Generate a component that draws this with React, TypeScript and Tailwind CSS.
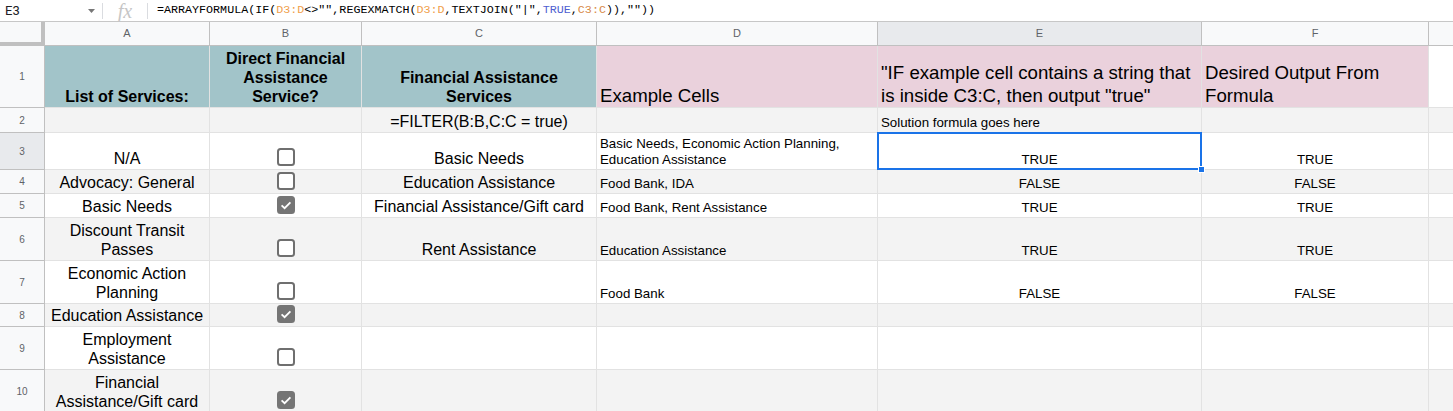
// Google Sheets-style grid: services list with checkbox + REGEXMATCH example
import type { ReactNode } from "react";

const COLS = ["w-[165px]", "w-[152px]", "w-[235px]", "w-[281px]", "w-[324px]", "w-[227px]"];
const LETTERS = ["A", "B", "C", "D", "E", "F"];

type Kind = "body" | "bold" | "small" | "title";

type CellDef = {
  text?: ReactNode;
  kind?: Kind;
  left?: boolean;
  check?: boolean;
  bg?: string;
  selected?: boolean;
};

type RowDef = {
  h: string;
  stripe: boolean;
  cells: CellDef[];
};

const kindClass: Record<Kind, string> = {
  body: "text-[16px] leading-[19px] pb-[1px]",
  bold: "text-[16px] leading-[19px] font-bold pb-[1px]",
  small: "text-[13.3px] leading-[16px] pb-[1px]",
  title: "text-[18.67px] leading-[23px] pb-0",
};

const TEAL = "bg-[#a2c4c9]";
const PINK = "bg-[#ead1dc]";

const rows: RowDef[] = [
  {
    h: "h-[62px]",
    stripe: false,
    cells: [
      { text: "List of Services:", kind: "bold", bg: TEAL },
      { text: <>Direct Financial<br />Assistance<br />Service?</>, kind: "bold", bg: TEAL },
      { text: <>Financial Assistance<br />Services</>, kind: "bold", bg: TEAL },
      { text: "Example Cells", kind: "title", left: true, bg: PINK },
      { text: <>"IF example cell contains a string that<br />is inside C3:C, then output "true"</>, kind: "title", left: true, bg: PINK },
      { text: <>Desired Output From<br />Formula</>, kind: "title", left: true, bg: PINK },
    ],
  },
  {
    h: "h-[25px]",
    stripe: true,
    cells: [
      {},
      {},
      { text: "=FILTER(B:B,C:C = true)" },
      {},
      { text: "Solution formula goes here", kind: "small", left: true },
      {},
    ],
  },
  {
    h: "h-[37px]",
    stripe: false,
    cells: [
      { text: "N/A" },
      { check: false },
      { text: "Basic Needs" },
      { text: <>Basic Needs, Economic Action Planning,<br />Education Assistance</>, kind: "small", left: true },
      { text: "TRUE", kind: "small", selected: true },
      { text: "TRUE", kind: "small" },
    ],
  },
  {
    h: "h-[24px]",
    stripe: true,
    cells: [
      { text: "Advocacy: General" },
      { check: false },
      { text: "Education Assistance" },
      { text: "Food Bank, IDA", kind: "small", left: true },
      { text: "FALSE", kind: "small" },
      { text: "FALSE", kind: "small" },
    ],
  },
  {
    h: "h-[24px]",
    stripe: false,
    cells: [
      { text: "Basic Needs" },
      { check: true },
      { text: "Financial Assistance/Gift card" },
      { text: "Food Bank, Rent Assistance", kind: "small", left: true },
      { text: "TRUE", kind: "small" },
      { text: "TRUE", kind: "small" },
    ],
  },
  {
    h: "h-[43px]",
    stripe: true,
    cells: [
      { text: <>Discount Transit<br />Passes</> },
      { check: false },
      { text: "Rent Assistance" },
      { text: "Education Assistance", kind: "small", left: true },
      { text: "TRUE", kind: "small" },
      { text: "TRUE", kind: "small" },
    ],
  },
  {
    h: "h-[43px]",
    stripe: false,
    cells: [
      { text: <>Economic Action<br />Planning</> },
      { check: false },
      {},
      { text: "Food Bank", kind: "small", left: true },
      { text: "FALSE", kind: "small" },
      { text: "FALSE", kind: "small" },
    ],
  },
  {
    h: "h-[23px]",
    stripe: true,
    cells: [{ text: "Education Assistance" }, { check: true }, {}, {}, {}, {}],
  },
  {
    h: "h-[43px]",
    stripe: false,
    cells: [{ text: <>Employment<br />Assistance</> }, { check: false }, {}, {}, {}, {}],
  },
  {
    h: "h-[43px]",
    stripe: true,
    cells: [{ text: <>Financial<br />Assistance/Gift card</> }, { check: true }, {}, {}, {}, {}],
  },
];

function Checkbox({ checked }: { checked: boolean }) {
  return (
    <svg width="18" height="18" viewBox="0 0 18 18" className="mb-[1px]">
      {checked ? (
        <>
          <rect x="1" y="1" width="16" height="16" rx="2.5" fill="#757575" stroke="#757575" strokeWidth="2" />
          <path d="M4.6 9.3 L7.6 12.2 L13.4 6.4" fill="none" stroke="#fff" strokeWidth="1.8" />
        </>
      ) : (
        <rect x="1" y="1" width="16" height="16" rx="2.5" fill="#fff" stroke="#6f6f6f" strokeWidth="2" />
      )}
    </svg>
  );
}

function Cell({ def, width, stripe }: { def: CellDef; width: string; stripe: boolean }) {
  const kind = def.kind ?? "body";
  const bg = def.bg ?? (stripe ? "bg-[#f3f3f3]" : "bg-white");
  return (
    <div
      className={`relative flex shrink-0 items-end border-r border-b border-[#e2e2e2] px-[3px] text-black ${width} ${bg} ${
        def.left ? "justify-start text-left" : "justify-center text-center"
      } ${def.check !== undefined ? "pb-[2px]" : kindClass[kind]}`}
    >
      {def.check !== undefined ? <Checkbox checked={def.check} /> : <div className="whitespace-nowrap">{def.text}</div>}
      {def.selected && (
        <>
          <div className="pointer-events-none absolute top-[-1px] left-[-1px] right-[-1px] bottom-[-1px] z-10 border-2 border-[#1a73e8]" />
          <div className="absolute right-[-4px] bottom-[-4px] z-20 h-[7px] w-[7px] border border-white bg-[#1a73e8]" />
        </>
      )}
    </div>
  );
}

export default function App() {
  return (
    <div className="h-[411px] w-[1453px] overflow-hidden bg-white font-['Liberation_Sans',Arial,sans-serif]">
      {/* formula bar */}
      <div className="flex h-[22px] items-center border-b border-[#c7c7c7] bg-white">
        <div className="flex h-full w-[102px] items-center justify-between pl-[5px] pr-[7px] font-['Roboto',sans-serif] text-[13px] text-[#202124]">
          <span>E3</span>
          <svg width="7" height="4" viewBox="0 0 7 4">
            <polygon points="0,0 7,0 3.5,4" fill="#777" />
          </svg>
        </div>
        <div className="h-[16px] w-px bg-[#dadce0]" />
        <div className="flex w-[44px] items-center justify-center font-['Liberation_Serif',serif] text-[20px] italic leading-none text-[#c6c6c6]">
          fx
        </div>
        <div className="h-[16px] w-px bg-[#dadce0]" />
        <div className="pl-[9px] font-['Liberation_Mono',monospace] text-[11.7px] text-black">
          =ARRAYFORMULA(IF(<span className="text-[#f0a04b]">D3:D</span>&lt;&gt;"",REGEXMATCH(
          <span className="text-[#f0a04b]">D3:D</span>,TEXTJOIN("|",<span className="text-[#4f5fd1]">TRUE</span>,
          <span className="text-[#d88a4a]">C3:C</span>)),""))
        </div>
      </div>

      {/* column headers */}
      <div className="flex h-[24px]">
        <div className="w-[45px] shrink-0 border-r-4 border-b-4 border-[#c0c0c0] bg-[#f8f9fa]" />
        {LETTERS.map((l, i) => (
          <div
            key={l}
            className={`flex shrink-0 items-center justify-center border-r border-b border-[#c0c0c0] text-[11px] text-[#5f6368] ${COLS[i]} ${
              l === "E" ? "bg-[#e8eaed]" : "bg-[#f8f9fa]"
            }`}
          >
            {l}
          </div>
        ))}
        <div className="flex-1 border-b border-[#c0c0c0] bg-[#f8f9fa]" />
      </div>

      {/* rows */}
      {rows.map((row, r) => (
        <div key={r} className={`flex ${row.h}`}>
          <div
            className={`flex w-[45px] shrink-0 items-center justify-center border-r border-b border-[#c0c0c0] text-[10px] text-[#5f6368] ${
              r === 2 ? "bg-[#e8eaed]" : "bg-[#f8f9fa]"
            }`}
          >
            {r + 1}
          </div>
          {row.cells.map((c, i) => (
            <Cell key={i} def={c} width={COLS[i]} stripe={row.stripe} />
          ))}
          <div className={`flex-1 border-b border-[#e2e2e2] ${row.stripe ? "bg-[#f3f3f3]" : "bg-white"}`} />
        </div>
      ))}
    </div>
  );
}
